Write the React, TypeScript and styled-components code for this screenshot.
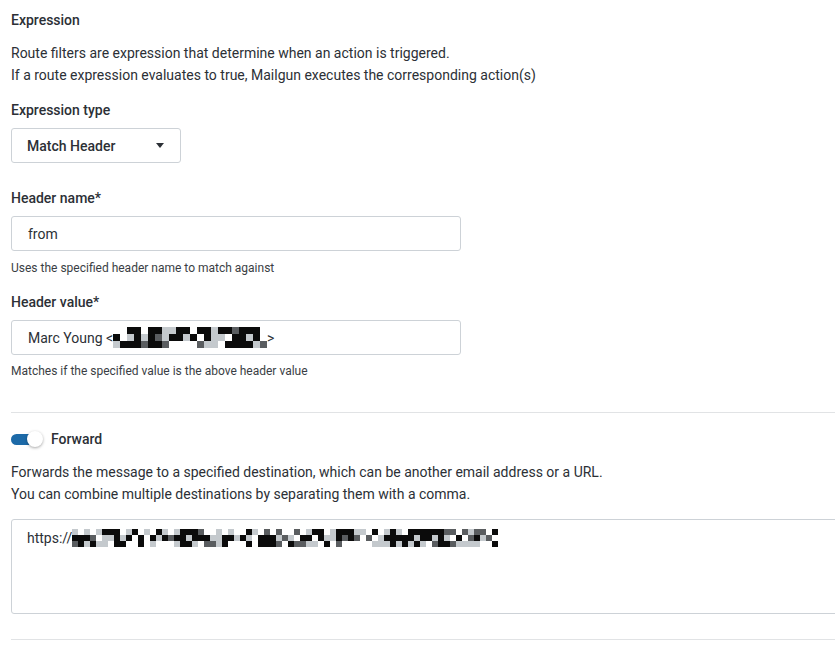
import React from "react";
import styled, { createGlobalStyle } from "styled-components";

const Global = createGlobalStyle`
  html, body { margin: 0; padding: 0; background: #fff; }
  body { font-family: Roboto, "Noto Sans", "Liberation Sans", sans-serif; color: #2c3036; }
`;

const Page = styled.div`
  width: 835px;
  overflow: hidden;
  padding: 10px 0 0 11px;
  box-sizing: border-box;
  display: flex;
  flex-direction: column;
`;

const Title = styled.div`
  font-size: 14px;
  line-height: 20px;
  font-weight: 500;
`;

const Description = styled.div<{ $mt: number }>`
  margin-top: ${(p) => p.$mt}px;
  font-size: 14px;
  line-height: 22px;
  font-weight: 400;
`;

const Label = styled.div<{ $mt: number }>`
  margin-top: ${(p) => p.$mt}px;
  font-size: 14px;
  line-height: 20px;
  font-weight: 500;
`;

const Select = styled.div`
  margin-top: 8px;
  width: 170px;
  height: 35px;
  box-sizing: border-box;
  border: 1px solid #cdd2d7;
  border-radius: 3px;
  display: flex;
  align-items: center;
  justify-content: space-between;
  padding: 0 16px 0 15px;
  font-size: 14px;
  font-weight: 500;
`;

const Caret = styled.span`
  width: 0;
  height: 0;
  border-left: 4.5px solid transparent;
  border-right: 4.5px solid transparent;
  border-top: 5px solid #2c3036;
`;

const Input = styled.div`
  margin-top: 8px;
  width: 450px;
  height: 35px;
  box-sizing: border-box;
  border: 1px solid #cdd2d7;
  border-radius: 3px;
  display: flex;
  align-items: center;
  padding: 0 16px;
  font-size: 14px;
  font-weight: 400;
`;

const Help = styled.div<{ $mt: number }>`
  margin-top: ${(p) => p.$mt}px;
  font-size: 12px;
  line-height: 16px;
  color: #3a3e44;
`;

const Divider = styled.div<{ $mt: number }>`
  margin-top: ${(p) => p.$mt}px;
  width: 900px;
  height: 1px;
  background: #e1e3e5;
`;

const ToggleRow = styled.div`
  margin-top: 17px;
  height: 18px;
  display: flex;
  align-items: center;
  gap: 8px;
`;

const Track = styled.span`
  position: relative;
  width: 28px;
  height: 11px;
  border-radius: 6px;
  background: #1d6aa8;
  display: inline-block;
  margin-right: 4px;
`;

const Knob = styled.span`
  position: absolute;
  left: 16px;
  top: -3px;
  width: 16px;
  height: 16px;
  border-radius: 50%;
  background: #fff;
  box-shadow: 0 1px 3px rgba(0, 0, 0, 0.35);
`;

const ToggleLabel = styled.span`
  font-size: 14px;
  font-weight: 500;
`;

const TextArea = styled.div`
  margin-top: 14px;
  width: 900px;
  height: 95px;
  box-sizing: border-box;
  border: 1px solid #cdd2d7;
  border-radius: 3px;
  padding: 8px 15px;
  font-size: 14px;
  line-height: 20px;
  display: flex;
  align-items: flex-start;
`;

const Inline = styled.span`
  display: inline-flex;
  align-items: center;
`;

function rand(seed: number) {
  let s = seed;
  return () => {
    s = (s * 9301 + 49297) % 233280;
    return s / 233280;
  };
}

function Mosaic({ cols, rows, cell, seed }: { cols: number; rows: number; cell: number; seed: number }) {
  const r = rand(seed);
  const rects: React.ReactNode[] = [];
  for (let y = 0; y < rows; y++) {
    for (let x = 0; x < cols; x++) {
      const v = r();
      const fill = v < 0.4 ? "#0b0b0b" : v < 0.65 ? "#c4c9cd" : v < 0.75 ? "#5a5d60" : "#ffffff";
      rects.push(<rect key={`${x}-${y}`} x={x * cell} y={y * cell} width={cell} height={cell} fill={fill} />);
    }
  }
  return (
    <svg width={cols * cell} height={rows * cell} style={{ display: "block" }}>
      {rects}
    </svg>
  );
}

export default function App() {
  return (
    <>
      <Global />
      <Page>
        <Title>Expression</Title>
        <Description $mt={12}>
          Route filters are expression that determine when an action is triggered.
          <br />
          If a route expression evaluates to true, Mailgun executes the corresponding action(s)
        </Description>
        <Label $mt={14}>Expression type</Label>
        <Select>
          <span>Match Header</span>
          <Caret />
        </Select>
        <Label $mt={25}>Header name*</Label>
        <Input>from</Input>
        <Help $mt={9}>Uses the specified header name to match against</Help>
        <Label $mt={16}>Header value*</Label>
        <Input>
          <Inline>
            Marc Young &lt;
            <Mosaic cols={22} rows={3} cell={7} seed={17} />
            &gt;
          </Inline>
        </Input>
        <Help $mt={8}>Matches if the specified value is the above header value</Help>
        <Divider $mt={33} />
        <ToggleRow>
          <Track>
            <Knob />
          </Track>
          <ToggleLabel>Forward</ToggleLabel>
        </ToggleRow>
        <Description $mt={13}>
          Forwards the message to a specified destination, which can be another email address or a URL.
          <br />
          You can combine multiple destinations by separating them with a comma.
        </Description>
        <TextArea>
          <Inline>
            https://
            <Mosaic cols={71} rows={3} cell={6} seed={5} />
          </Inline>
        </TextArea>
        <Divider $mt={25} />
      </Page>
    </>
  );
}
